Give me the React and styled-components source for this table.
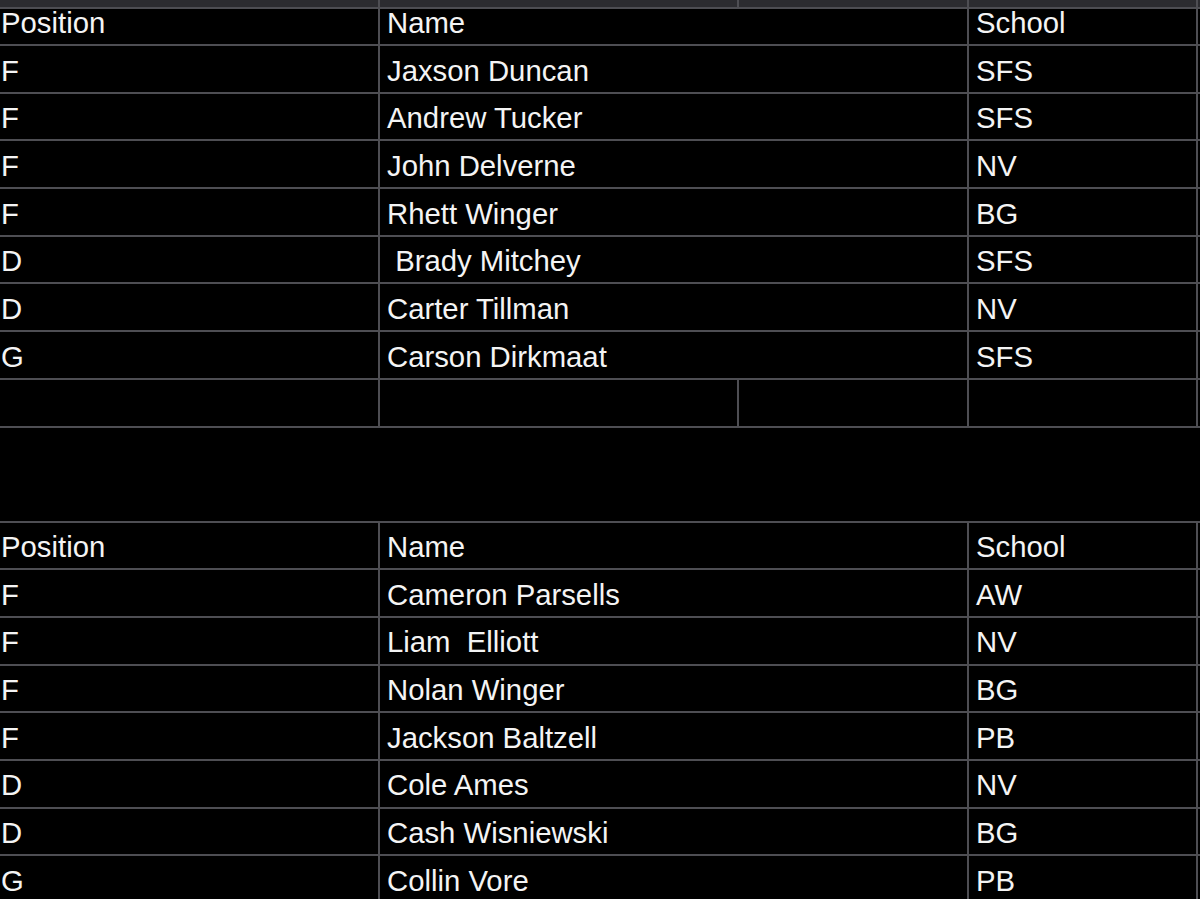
import styled, { createGlobalStyle } from "styled-components";

const GlobalStyle = createGlobalStyle`
  html, body {
    margin: 0;
    padding: 0;
    background: #000;
    overflow: hidden;
  }
`;

const LINE = "#4e4e53";

const Sheet = styled.div`
  width: 1200px;
  height: 899px;
  background: #000;
  color: #f4f4f4;
  font-family: "Liberation Sans", Arial, Helvetica, sans-serif;
  font-size: 29.3px;
  display: flex;
  flex-direction: column;
  overflow: hidden;
`;

const Table = styled.div`
  flex-shrink: 0;
  display: flex;
  flex-direction: column;
  border-top: ${(p) => (p.$ruled ? `2px solid ${LINE}` : "none")};
`;

const Row = styled.div`
  flex-shrink: 0;
  display: grid;
  grid-template-columns: 380px 359px 230px 229px 1fr;
  box-sizing: border-box;
  height: ${(p) => p.$h || 47.7}px;
  border-bottom: 2px solid ${LINE};
  background: ${(p) => (p.$strip ? "#2c2c30" : "#000")};
`;

const Cell = styled.div`
  grid-column: span ${(p) => p.$span || 1};
  box-sizing: border-box;
  border-right: ${(p) => (p.$last ? "none" : `2px solid ${LINE}`)};
  padding-left: ${(p) => p.$pad ?? 7}px;
  padding-top: ${(p) => (p.$short ? 0 : 1.5)}px;
  line-height: ${(p) => (p.$short ? 27 : 46)}px;
  white-space: pre;
`;

const Gap = styled.div`
  flex-shrink: 0;
  height: 93px;
`;

const rosterA = [
  ["F", "Jaxson Duncan", "SFS"],
  ["F", "Andrew Tucker", "SFS"],
  ["F", "John Delverne", "NV"],
  ["F", "Rhett Winger", "BG"],
  ["D", " Brady Mitchey", "SFS"],
  ["D", "Carter Tillman", "NV"],
  ["G", "Carson Dirkmaat", "SFS"],
];

const rosterB = [
  ["F", "Cameron Parsells", "AW"],
  ["F", "Liam  Elliott", "NV"],
  ["F", "Nolan Winger", "BG"],
  ["F", "Jackson Baltzell", "PB"],
  ["D", "Cole Ames", "NV"],
  ["D", "Cash Wisniewski", "BG"],
  ["G", "Collin Vore", "PB"],
];

function BlankRow({ strip, h }) {
  return (
    <Row $strip={strip} $h={h}>
      <Cell />
      <Cell />
      <Cell />
      <Cell />
      <Cell $last />
    </Row>
  );
}

function PlayerRow({ pos, name, school, short, h }) {
  return (
    <Row $h={h}>
      <Cell $pad={1} $short={short}>{pos}</Cell>
      <Cell $span={2} $short={short}>{name}</Cell>
      <Cell $short={short}>{school}</Cell>
      <Cell $last />
    </Row>
  );
}

function Roster({ players, top, ruled }) {
  return (
    <Table $ruled={ruled}>
      {top}
      <PlayerRow
        pos="Position"
        name="Name"
        school="School"
        short={!!top}
        h={top ? 37 : undefined}
      />
      {players.map(([pos, name, school], i) => (
        <PlayerRow key={i} pos={pos} name={name} school={school} />
      ))}
    </Table>
  );
}

export default function App() {
  return (
    <Sheet>
      <GlobalStyle />
      <Roster players={rosterA} top={<BlankRow strip h={9} />} />
      <BlankRow />
      <Gap />
      <Roster players={rosterB} ruled />
    </Sheet>
  );
}
